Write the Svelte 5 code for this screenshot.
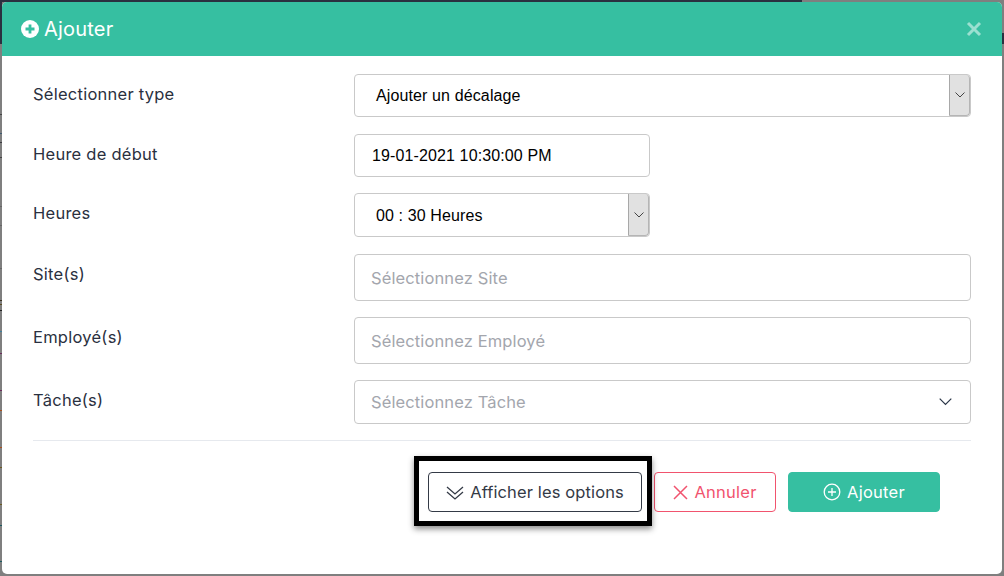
<script>
  const rows = [
    { label: 'Sélectionner type', kind: 'select', value: 'Ajouter un décalage', cls: 'r43 wide-gap' },
    { label: 'Heure de début', kind: 'text', value: '19-01-2021 10:30:00 PM', cls: 'r43 short' },
    { label: 'Heures', kind: 'select', value: '00 : 30 Heures', cls: 'r44 short wide-gap' },
    { label: 'Site(s)', kind: 'ph', value: 'Sélectionnez Site', cls: 'r47' },
    { label: 'Employé(s)', kind: 'ph', value: 'Sélectionnez Employé', cls: 'r47' },
    { label: 'Tâche(s)', kind: 'multi', value: 'Sélectionnez Tâche', cls: 'r44' }
  ];

  // page behind the overlay, only a sliver of it shows on the left edge
  const ticks = [
    [114, '#444'], [133, '#3d5a70'], [142, '#3a3a40'], [157, '#444'], [206, '#666'], [225, '#666'],
    [268, '#666'], [300, '#3a3020'], [304, '#5a4a20'], [310, '#222'], [331, '#3f7f9c'], [353, '#6a2a5a'],
    [390, '#6a2a5a'], [410, '#a8501c'], [447, '#a8501c'], [467, '#6a5a20'], [504, '#6a5a20'],
    [525, '#1a5a60'], [561, '#1a5a60']
  ];
  const backdrop = ticks
    .map(([y, c]) => `linear-gradient(${c},${c}) 0 ${y}px/2px 1px no-repeat`)
    .join(',');
</script>

<div class="page" style="background: {backdrop}, linear-gradient(#2a3040,#2a3040) 0 0/802px 2px no-repeat, linear-gradient(#2a3040,#2a3040) 0 0/2px 44px no-repeat, linear-gradient(#2a3040,#2a3040) 1002px 33px/2px 11px no-repeat, #7f7f7f">
  <div class="modal">
    <header class="head">
      <h1>
        <svg width="18" height="18" viewBox="0 0 18 18">
          <circle cx="9" cy="9" r="9" fill="#fff" />
          <path d="M9 4.500v9M4.500 9h9" stroke="#36bfa1" stroke-width="2.800" />
        </svg>
        Ajouter
      </h1>
      <svg class="close" width="16" height="16" viewBox="0 0 16 16">
        <path d="M2 2l12 12M14 2L2 14" stroke="#9be0d1" stroke-width="3" />
      </svg>
    </header>

    <div class="body">
      {#each rows as row}
        <div class="row" class:wide={row.cls.includes('wide-gap')}>
          <div class="label">{row.label}</div>
          <div class="field {row.cls} {row.kind}">
            <span class="val">{row.value}</span>
            {#if row.kind === 'select'}
              <span class="spin">
                <svg width="10" height="6" viewBox="0 0 10 6"><path d="M.5.5L5 5 9.500.5" fill="none" stroke="#444" /></svg>
              </span>
            {:else if row.kind === 'multi'}
              <svg class="chev" width="13" height="8" viewBox="0 0 13 8"><path d="M.7.7l5.800 5.800L12.300.7" fill="none" stroke="#2a3547" stroke-width="1.200" /></svg>
            {/if}
          </div>
        </div>
      {/each}

      <hr />

      <div class="actions">
        <div class="hl-wrap">
          <button class="btn opt">
            <svg width="18" height="15" viewBox="0 0 18 15">
              <path d="M1 2l8 7 8-7M1 7l8 7 8-7" fill="none" stroke="#343a46" stroke-width="1.300" />
            </svg>
            Afficher les options
          </button>
          <div class="highlight"></div>
        </div>
        <button class="btn cancel">
          <svg width="15" height="15" viewBox="0 0 15 15"><path d="M1 1l13 13M14 1L1 14" stroke="#f1536e" stroke-width="1.500" /></svg>
          Annuler
        </button>
        <button class="btn add">
          <svg width="18" height="18" viewBox="0 0 18 18">
            <circle cx="9" cy="9" r="7.800" fill="none" stroke="#fff" stroke-width="1.300" />
            <path d="M9 5v8M5 9h8" stroke="#fff" stroke-width="1.300" />
          </svg>
          Ajouter
        </button>
      </div>
    </div>
  </div>
</div>

<style>
  :global(body) {
    margin: 0;
  }
  .page {
    width: 1004px;
    height: 576px;
    box-sizing: border-box;
    padding: 2px;
    font-family: "Inter", "Noto Sans", sans-serif;
    overflow: hidden;
  }
  .modal {
    height: 572px;
    background: #fff;
    border-radius: 5px;
    overflow: hidden;
  }
  .head {
    height: 54px;
    background: #36bfa1;
    display: flex;
    align-items: center;
    justify-content: space-between;
    padding: 0 20px 0 19px;
    color: #fff;
  }
  .head h1 {
    margin: 0;
    font-size: 20px;
    font-weight: 400;
    letter-spacing: 0.2px;
    display: flex;
    align-items: center;
    gap: 5px;
  }
  .body {
    padding: 18px 31px 0;
  }
  .row {
    display: flex;
    margin-bottom: 16px;
  }
  .row.wide {
    margin-bottom: 17px;
  }
  .label {
    width: 321px;
    flex: none;
    font-size: 16.500px;
    letter-spacing: 0.25px;
    line-height: 22px;
    padding-top: 9px;
    color: #2a3040;
  }
  .field {
    flex: 1;
    box-sizing: border-box;
    border: 1px solid #c9c9c9;
    border-radius: 4px;
    display: flex;
    align-items: center;
    font-family: "Liberation Sans", sans-serif;
    font-size: 16px;
    letter-spacing: 0.12px;
    color: #000;
  }
  .r43 { height: 43px; }
  .r44 { height: 44px; }
  .r47 { height: 47px; }
  .short {
    flex: none;
    width: 296px;
  }
  .select .val { padding-left: 21px; }
  .r44.select .val { padding-top: 1px; }
  .text .val { padding-left: 17px; }
  .ph .val,
  .multi .val {
    padding-left: 16px;
    font-family: "Inter", "Noto Sans", sans-serif;
    font-size: 16.500px;
    color: #a3a6ad;
  }
  .spin {
    margin-left: auto;
    width: 21px;
    height: 100%;
    box-sizing: border-box;
    background: #e1e1e1;
    border-left: 1px solid #a8a8a8;
    border-right: 1px solid #b5b5b5;
    border-bottom: 1px solid #b5b5b5;
    border-radius: 0 4px 4px 0;
    display: flex;
    align-items: center;
    justify-content: center;
  }
  .chev {
    margin-left: auto;
    margin-right: 18px;
  }
  hr {
    border: 0;
    border-top: 1px solid #e6e9ee;
    margin: 16px 0 31px;
  }
  .actions {
    display: flex;
    gap: 12px;
    margin-left: 395px;
  }
  .btn {
    height: 40px;
    box-sizing: border-box;
    border-radius: 4px;
    font-family: "Inter", "Noto Sans", sans-serif;
    font-size: 16.500px;
    letter-spacing: 0.25px;
    display: flex;
    align-items: center;
    justify-content: center;
    gap: 6px;
    padding: 0;
    background: #fff;
  }
  .hl-wrap {
    position: relative;
  }
  .opt {
    width: 214px;
    border: 1px solid #343a46;
    color: #343a46;
    letter-spacing: 0.12px;
  }
  .highlight {
    position: absolute;
    left: -14px;
    top: -16px;
    width: 238px;
    height: 70px;
    box-sizing: border-box;
    border: 5px solid #000;
    box-shadow: 0 3px 6px rgba(0, 0, 0, 0.45);
  }
  .cancel {
    width: 122px;
    border: 1px solid #f1536e;
    color: #f1536e;
  }
  .add {
    width: 152px;
    border: 1px solid #36bfa1;
    background: #36bfa1;
    color: #fff;
  }
</style>
